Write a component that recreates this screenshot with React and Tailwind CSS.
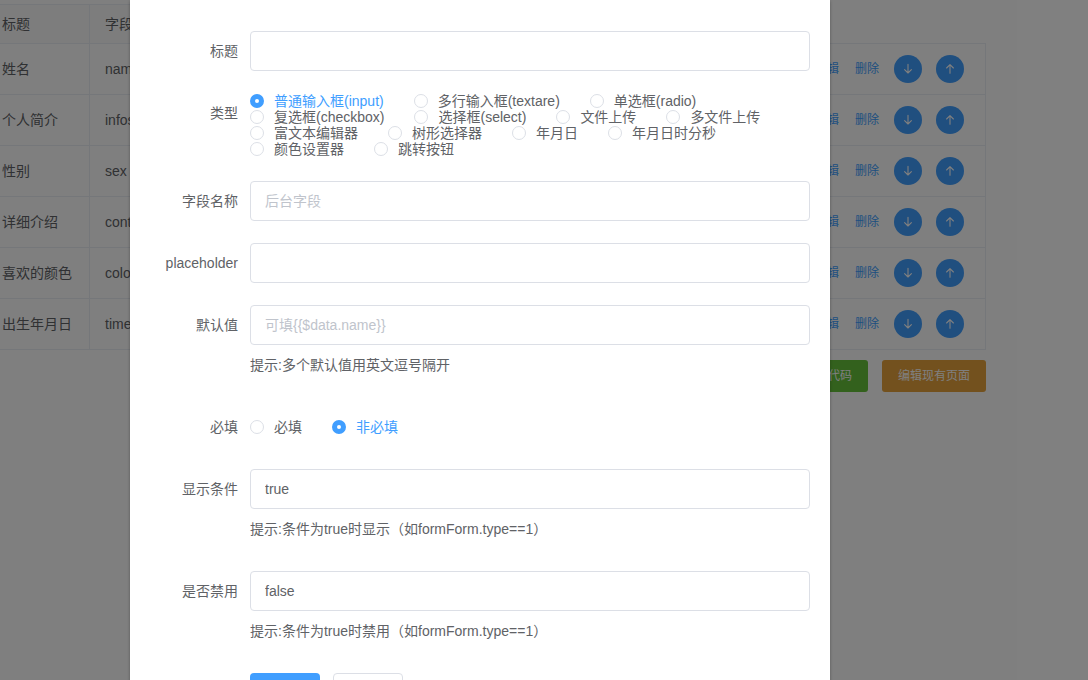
import { useState } from "react";
import { clsx } from "clsx";

const rows = [
  ["姓名", "name"],
  ["个人简介", "infos"],
  ["性别", "sex"],
  ["详细介绍", "content"],
  ["喜欢的颜色", "color"],
  ["出生年月日", "time"],
];

const types = [
  "普通输入框(input)",
  "多行输入框(textare)",
  "单选框(radio)",
  "复选框(checkbox)",
  "选择框(select)",
  "文件上传",
  "多文件上传",
  "富文本编辑器",
  "树形选择器",
  "年月日",
  "年月日时分秒",
  "颜色设置器",
  "跳转按钮",
];

function Arrow({ up }) {
  return (
    <svg viewBox="0 0 12 12" className="size-3" fill="none" stroke="currentColor" strokeWidth="1.1" strokeLinecap="round" strokeLinejoin="round">
      <path d={up ? "M6 10.2V1.6M2.6 5 6 1.6l3.4 3.4" : "M6 1.4V10M2.6 6.6 6 10l3.4-3.4"} />
    </svg>
  );
}

function RoundButton({ up }) {
  return (
    <button type="button" aria-label={up ? "上移" : "下移"} className="flex size-7 items-center justify-center rounded-full bg-[#409eff] text-white">
      <Arrow up={up} />
    </button>
  );
}

function Background() {
  return (
    <div className="w-[986px] pt-1">
      <table className="w-full table-fixed border-separate border-spacing-0 text-left text-sm text-[#606266]">
        <thead>
          <tr className="h-10">
            <th className="w-[90px] border-y border-r border-[#ebeef5] bg-[#fafafa] pl-0.5 font-normal">标题</th>
            <th className="border-y border-[#ebeef5] bg-[#fafafa] pl-[15px] font-normal">字段名称</th>
            <th className="w-[200px] border-b border-[#ebeef5]" />
          </tr>
        </thead>
        <tbody>
          {rows.map(([title, field]) => (
            <tr key={field} className="h-[51px]">
              <td className="border-r border-b border-[#ebeef5] pl-0.5">{title}</td>
              <td className="border-b border-[#ebeef5] pl-[15px]">{field}</td>
              <td className="border-r border-b border-[#ebeef5]">
                <div className="flex items-center justify-end pr-[21px] text-xs text-[#409eff]">
                  <button type="button" className="mr-4">编辑</button>
                  <button type="button" className="mr-[15px]">删除</button>
                  <div className="flex gap-3.5">
                    <RoundButton />
                    <RoundButton up />
                  </div>
                </div>
              </td>
            </tr>
          ))}
        </tbody>
      </table>
      <div className="mt-2.5 flex justify-end gap-3.5 text-xs text-white">
        <button type="button" className="h-8 rounded-[3px] bg-[#67c23a] px-4">生成代码</button>
        <button type="button" className="h-8 rounded-[3px] bg-[#e6a23c] px-4">编辑现有页面</button>
      </div>
    </div>
  );
}

function Radio({ name, label, checked, onChange }) {
  return (
    <label className={clsx("mr-[30px] inline-flex h-4 cursor-pointer items-center gap-2.5 text-sm whitespace-nowrap", checked ? "text-[#409eff]" : "text-[#606266]")}>
      <input
        type="radio"
        name={name}
        checked={checked}
        onChange={onChange}
        className="size-3.5 shrink-0 appearance-none rounded-full border border-[#dcdfe6] bg-white checked:border-5 checked:border-[#409eff]"
      />
      <span>{label}</span>
    </label>
  );
}

function RadioGroup({ name, options, initial, className }) {
  const [value, setValue] = useState(initial);
  return (
    <div role="radiogroup" aria-labelledby={name + "-label"} className={className}>
      {options.map((o) => (
        <Radio key={o} name={name} label={o} checked={value === o} onChange={() => setValue(o)} />
      ))}
    </div>
  );
}

const labelClass = "w-[120px] shrink-0 pr-3 text-right leading-10";

function Field({ id, label, hint, ...rest }) {
  return (
    <div className="flex">
      <label htmlFor={id} className={labelClass}>{label}</label>
      <div className="min-w-0 flex-1">
        <input
          id={id}
          type="text"
          className="block h-10 w-full rounded border border-[#dcdfe6] bg-white px-3.5 text-[#606266] outline-none placeholder:text-[#c0c4cc] focus:border-[#409eff]"
          {...rest}
        />
        {hint && <p className="leading-10">{hint}</p>}
      </div>
    </div>
  );
}

export default function App() {
  return (
    <div className="relative h-screen overflow-hidden bg-white font-['Liberation_Sans','Noto_Sans_CJK_SC',sans-serif]">
      <Background />
      <div className="absolute inset-0 overflow-hidden bg-black/50 px-[130px]">
        <form className="flex min-h-full w-full max-w-[700px] flex-col gap-[22px] bg-white pt-[31px] pr-5 text-sm text-[#606266] shadow-[0_1px_3px_rgba(0,0,0,0.3)]">
          <Field id="title" label="标题" />
          <div className="flex">
            <span id="type-label" className={labelClass}>类型</span>
            <RadioGroup name="type" options={types} initial={types[0]} className="flex min-w-0 flex-1 flex-wrap content-start pb-0.5" />
          </div>
          <Field id="field" label="字段名称" placeholder="后台字段" />
          <Field id="placeholder" label="placeholder" />
          <Field id="default" label="默认值" placeholder="可填{{$data.name}}" hint="提示:多个默认值用英文逗号隔开" />
          <div className="flex">
            <span id="required-label" className={labelClass}>必填</span>
            <RadioGroup name="required" options={["必填", "非必填"]} initial="非必填" className="flex items-center" />
          </div>
          <Field id="visible" label="显示条件" defaultValue="true" hint="提示:条件为true时显示（如formForm.type==1）" />
          <Field id="disabled" label="是否禁用" defaultValue="false" hint="提示:条件为true时禁用（如formForm.type==1）" />
          <div className="flex gap-[13px] pl-[120px]">
            <button type="submit" className="h-10 w-[70px] rounded bg-[#409eff] text-white">提交</button>
            <button type="button" className="h-10 w-[70px] rounded border border-[#dcdfe6] bg-white">取消</button>
          </div>
        </form>
      </div>
    </div>
  );
}
